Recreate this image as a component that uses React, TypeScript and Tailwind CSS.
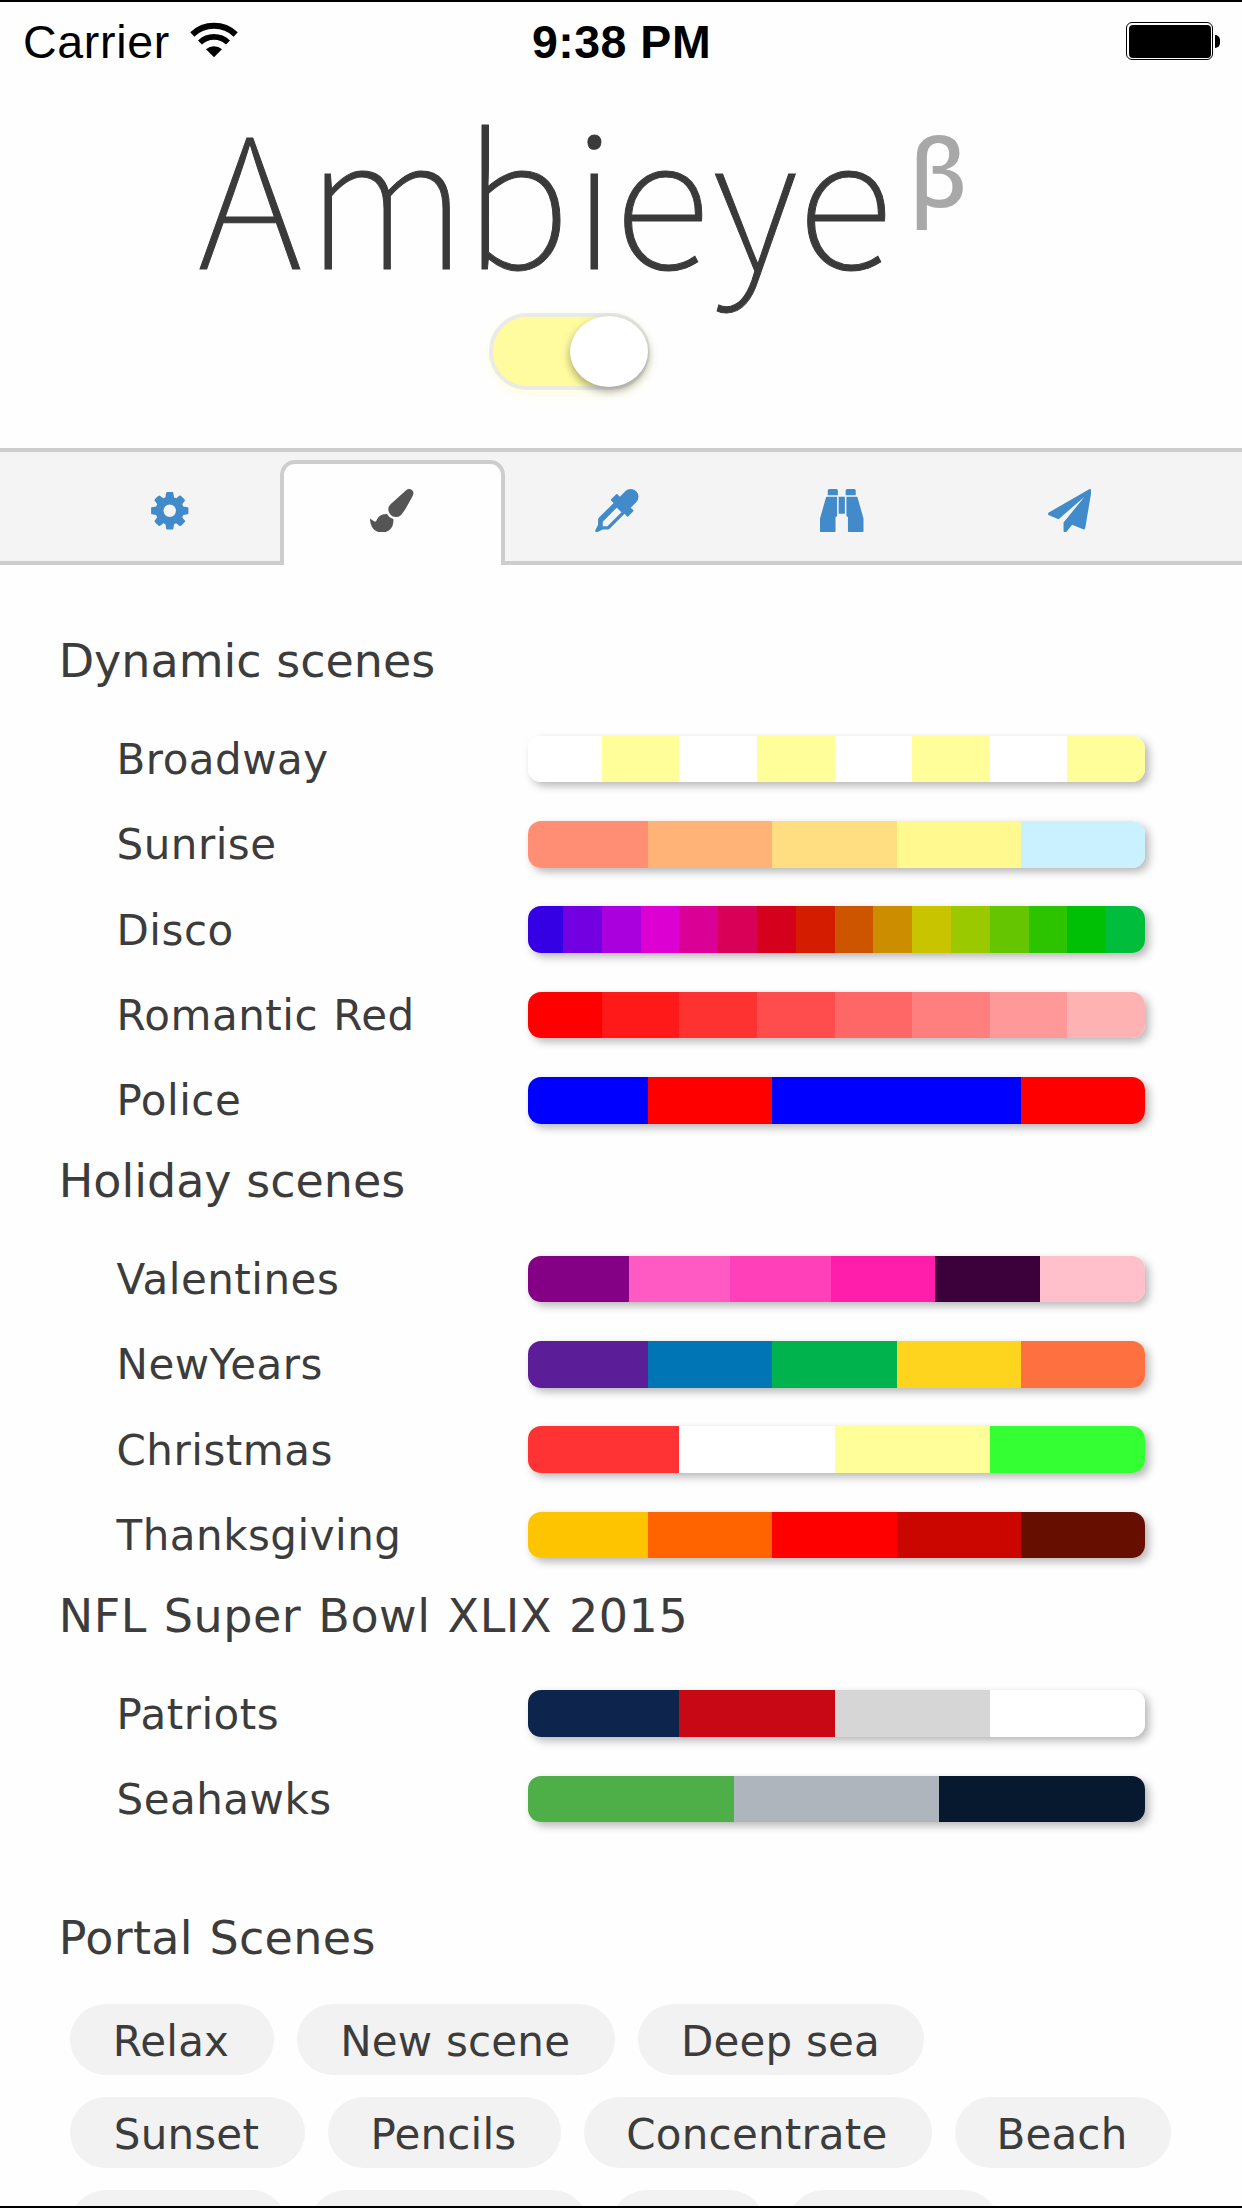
import React from "react";

type Segment = [color: string, units: number];
type Scene = { name: string; segments: Segment[] };

const even = (colors: string[], units: number): Segment[] =>
  colors.map((c, i) => [c, i === 0 ? units - 1 : units]);

const DYNAMIC: Scene[] = [
  { name: "Broadway", segments: even(["#ffffff", "#fffe99", "#ffffff", "#fffe99", "#ffffff", "#fffe99", "#ffffff", "#fffe99"], 20) },
  { name: "Sunrise", segments: even(["#ff8e75", "#ffb377", "#ffdd80", "#fff98f", "#caf1ff"], 32) },
  {
    name: "Disco",
    segments: even(
      ["#3500e4", "#7200e0", "#ab00de", "#dc00d3", "#da0096", "#d90058", "#d5001b", "#d31c00", "#ce5500", "#cc8d00", "#c9c400", "#9ac900", "#65c600", "#2cc400", "#00c006", "#00be3c"],
      10,
    ),
  },
  { name: "Romantic Red", segments: even(["#ff0000", "#ff1919", "#ff3232", "#ff4c4c", "#ff6666", "#ff7f7f", "#ff9999", "#ffb2b2"], 20) },
  { name: "Police", segments: even(["#0000ff", "#ff0000", "#0000ff", "#0000ff", "#ff0000"], 32) },
];

const HOLIDAY: Scene[] = [
  {
    name: "Valentines",
    segments: [["#840084", 26], ["#ff5ac4", 26], ["#ff40b8", 26], ["#ff1dac", 27], ["#3c003a", 27], ["#ffbfcb", 27]],
  },
  { name: "NewYears", segments: even(["#5c1e98", "#0075b5", "#00b34c", "#ffd41f", "#ff7040"], 32) },
  { name: "Christmas", segments: even(["#ff3333", "#ffffff", "#fffe99", "#33ff33"], 40) },
  { name: "Thanksgiving", segments: even(["#ffc400", "#ff6400", "#ff0000", "#cb0500", "#660f00"], 32) },
];

const NFL: Scene[] = [
  { name: "Patriots", segments: even(["#0d254c", "#c80815", "#d6d6d6", "#ffffff"], 40) },
  { name: "Seahawks", segments: [["#4eae47", 53], ["#aeb5bd", 53], ["#06192e", 53]] },
];

function WifiIcon() {
  return (
    <svg className="ml-[20px] mt-[3px] h-[36px] w-[48px]" viewBox="0 0 48 36" fill="none" stroke="#000">
      <path d="M2.300 12.500A31.500 31.500 0 0 1 45.700 12.500" strokeWidth="6" />
      <path d="M10 20.500A20.500 20.500 0 0 1 38 20.500" strokeWidth="5.800" />
      <path d="M16 27.200A12 12 0 0 1 32 27.200L24 35.300Z" fill="#000" stroke="none" />
    </svg>
  );
}

function Battery() {
  return (
    <div className="mt-[3px] flex items-center">
      <div className="h-[38px] w-[87px] rounded-[6px] border-[1.500px] border-black p-[1.500px]">
        <div className="h-full w-full rounded-[4px] bg-black" />
      </div>
      <div className="ml-[2px] h-[13px] w-[5px] rounded-r-[5px] bg-black" />
    </div>
  );
}

function StatusBar() {
  return (
    <div className="grid h-[76px] grid-cols-[1fr_auto_1fr] items-start pl-[23px] pr-[22px] pt-[17px] font-['Liberation_Sans',sans-serif] text-[46.500px] leading-none text-black">
      <div className="flex items-start">
        <span className="tracking-[0.700px]">Carrier</span>
        <WifiIcon />
      </div>
      <span className="font-bold tracking-[0.500px]">9:38 PM</span>
      <div className="flex justify-end">
        <Battery />
      </div>
    </div>
  );
}

function Logo() {
  return (
    <svg className="h-[236px] w-full" viewBox="0 78 1242 236">
      <text
        x="198 306 463 572 614 713 797"
        y="269"
        fill="#3a3a3a"
        stroke="#3a3a3a"
        strokeWidth="1"
        className="font-['Noto_Sans_CJK_SC',sans-serif] text-[181px] font-thin"
      >
        Ambieye
      </text>
      <text x="909" y="207" fill="#a8a8a8" className="font-['Noto_Sans',sans-serif] text-[95px] font-medium">
        β
      </text>
    </svg>
  );
}

function Toggle() {
  return (
    <div className="ml-[489px] flex h-[76.500px] w-[161px] items-center justify-end rounded-[39px] border-4 border-[#ebebe6] bg-[#fffca0] shadow-[0_4px_10px_rgba(255,252,160,0.3)]">
      <div className="-mr-[2px] h-[71px] w-[78px] shrink-0 rounded-[50%] bg-white shadow-[0_4px_10px_rgba(0,0,0,0.35)]" />
    </div>
  );
}

const ICONS = {
  cog: "M1152 896q0-106-75-181t-181-75-181 75-75 181 75 181 181 75 181-75 75-181zm512-109v222q0 12-8 23t-20 13l-185 28q-19 54-39 91 35 50 107 138 10 12 10 25t-9 23q-27 37-99 108t-94 71q-12 0-26-9l-138-108q-44 23-91 38-16 136-29 186-7 28-36 28h-222q-14 0-24.500-8.500t-11.500-21.500l-28-184q-49-16-90-37l-141 107q-10 9-25 9-14 0-25-11-126-114-165-168-7-10-7-23 0-12 8-23 15-21 51-66.500t54-70.500q-27-50-41-99l-183-27q-13-2-21-12.500t-8-23.500v-222q0-12 8-23t19-13l186-28q14-46 39-92-40-57-107-138-10-12-10-24 0-10 9-23 26-36 98.500-107.500t94.500-71.500q13 0 26 10l138 107q44-23 91-38 16-136 29-186 7-28 36-28h222q14 0 24.500 8.500t11.500 21.500l28 184q49 16 90 37l142-107q9-9 24-9 13 0 25 10 129 119 165 170 7 8 7 22 0 12-8 23-15 21-51 66.500t-54 70.500q26 50 41 98l183 28q13 2 21 12.500t8 23.500z",
  brush: "M1615 0q70 0 122.500 46.500t52.500 116.500q0 63-45 151-332 629-465 752-97 91-218 91-126 0-216.500-92.500t-90.500-219.500q0-128 92-212l638-579q59-54 130-54zm-909 1034q39 76 106.500 130t150.500 76l1 71q4 213-129.500 347t-348.500 134q-123 0-218-46.500t-152.500-127.500-86.500-183-29-220q7 5 41 30t62 44.500 59 36.500 46 17q41 0 55-37 25-66 57.500-112.500t69.500-76 88-47.500 103-25.500 125-10.500z",
  dropper: "M1698 94q94 94 94 226.500t-94 225.500l-225 223 104 104q10 10 10 23t-10 23l-210 210q-10 10-23 10t-23-10l-105-105-603 603q-37 37-90 37h-203l-256 128-64-64 128-256v-203q0-53 37-90l603-603-105-105q-10-10-10-23t10-23l210-210q10-10 23-10t23 10l104 104 223-225q93-94 225.500-94t226.500 94zm-1186 1442l576-576-192-192-576 576v192h192z",
  binoculars: "M704 320v768q0 26-19 45t-45 19v576q0 26-19 45t-45 19h-512q-26 0-45-19t-19-45v-512l249-873q7-23 31-23h424zm320 0v704h-256v-704h256zm768 896v512q0 26-19 45t-45 19h-512q-26 0-45-19t-19-45v-576q-26 0-45-19t-19-45v-768h424q24 0 31 23zm-1056-1152v192h-416v-192q0-26 19-45t45-19h288q26 0 45 19t19 45zm736 0v192h-416v-192q0-26 19-45t45-19h288q26 0 45 19t19 45z",
  plane: "M1764 11q33 24 27 64l-256 1536q-5 29-32 45-14 8-31 8-11 0-24-5l-453-185-242 295q-18 23-49 23-13 0-22-4-19-7-30.500-23.500t-11.500-36.500v-349l864-1059-1069 925-395-162q-37-14-40-55-2-40 32-59l1664-960q15-9 32-9 20 0 36 11z",
};

function TabIcon({ path }: { path: string }) {
  return (
    <svg className="h-[43.500px] w-[43.500px]" viewBox="0 0 1792 1792" fill="currentColor">
      <path d={path} />
    </svg>
  );
}

function Tabs() {
  const tab = "flex w-[224.800px] shrink-0 justify-center pt-[36.500px] ";
  return (
    <nav className="flex h-[116.500px] border-y-4 border-[#cdcdcd] bg-[#f4f4f4] pl-[55px] text-[#428bca]">
      <div className={tab + "pl-[5px]"}><TabIcon path={ICONS.cog} /></div>
      <div className="-mb-1 mt-[7.500px] flex w-[224.800px] shrink-0 justify-center rounded-t-[15px] border-x-4 border-t-4 border-[#cdcdcd] bg-[#fefefe] pt-[25px] text-[#555555]">
        <TabIcon path={ICONS.brush} />
      </div>
      <div className={tab}><TabIcon path={ICONS.dropper} /></div>
      <div className={tab}><TabIcon path={ICONS.binoculars} /></div>
      <div className={tab + "pl-[6px]"}><TabIcon path={ICONS.plane} /></div>
    </nav>
  );
}

function SceneRow({ name, segments }: Scene) {
  return (
    <div className="flex h-[85.360px] items-center pl-[58.500px]">
      <span className="w-[411.500px] shrink-0 pt-[2px] text-[42px] leading-none tracking-[0.500px] [word-spacing:1.500px]">{name}</span>
      <div className="flex h-[46.600px] w-[617px] overflow-hidden rounded-[13px] shadow-[4px_4px_8px_rgba(0,0,0,0.28)]">
        {segments.map(([color, units], i) => (
          <div key={i} className="h-full basis-0" style={{ backgroundColor: color, flexGrow: units }} />
        ))}
      </div>
    </div>
  );
}

function Heading({ children, className = "" }: { children: React.ReactNode; className?: string }) {
  return <h2 className={"pl-[0.700px] text-[46px] leading-[76.600px] " + className}>{children}</h2>;
}

function Section({ title, scenes, titleClass }: { title: string; scenes: Scene[]; titleClass?: string }) {
  return (
    <section>
      <Heading className={titleClass}>{title}</Heading>
      <div className="pt-[16.600px]">
        {scenes.map((s) => (
          <SceneRow key={s.name} {...s} />
        ))}
      </div>
    </section>
  );
}

function Pill({ width, children }: { width: number; children?: React.ReactNode }) {
  return (
    <div
      className="flex h-[70.500px] items-center justify-center whitespace-nowrap rounded-full bg-[#f2f2f2] pr-[1.500px] pt-[4px] text-[42px] leading-none tracking-[0.200px]"
      style={{ width }}
    >
      {children}
    </div>
  );
}

export default function App() {
  return (
    <div className="flex h-[2208px] w-[1242px] flex-col overflow-hidden border-y-2 border-black bg-[#fefefe] font-['DejaVu_Sans',sans-serif] text-[#3c3c3c]">
      <header className="h-[446px] shrink-0">
        <StatusBar />
        <Logo />
        <div className="-mt-[1px]">
          <Toggle />
        </div>
      </header>
      <div className="shrink-0">
        <Tabs />
      </div>
      <main className="min-h-0 grow pl-[58px] pt-[58.700px]">
        <Section title="Dynamic scenes" scenes={DYNAMIC} />
        <Section title="Holiday scenes" scenes={HOLIDAY} />
        <Section title="NFL Super Bowl XLIX 2015" scenes={NFL} titleClass="tracking-[0.550px] [word-spacing:1.800px]" />
        <div className="pt-[58.300px]">
          <Heading className="tracking-[0.350px] [word-spacing:1.500px]">Portal Scenes</Heading>
        </div>
        <div className="flex flex-col gap-[22.600px] pl-[11.700px] pt-[27.700px]">
          <div className="flex gap-[23px]">
            <Pill width={204}>Relax</Pill>
            <Pill width={318.500}>New scene</Pill>
            <Pill width={286}>Deep sea</Pill>
          </div>
          <div className="flex gap-[23px]">
            <Pill width={235}>Sunset</Pill>
            <Pill width={233}>Pencils</Pill>
            <Pill width={348}>Concentrate</Pill>
            <Pill width={216}>Beach</Pill>
          </div>
          <div className="flex gap-[23px]">
            <Pill width={217} />
            <Pill width={278} />
            <Pill width={154} />
            <Pill width={211} />
          </div>
        </div>
      </main>
    </div>
  );
}
